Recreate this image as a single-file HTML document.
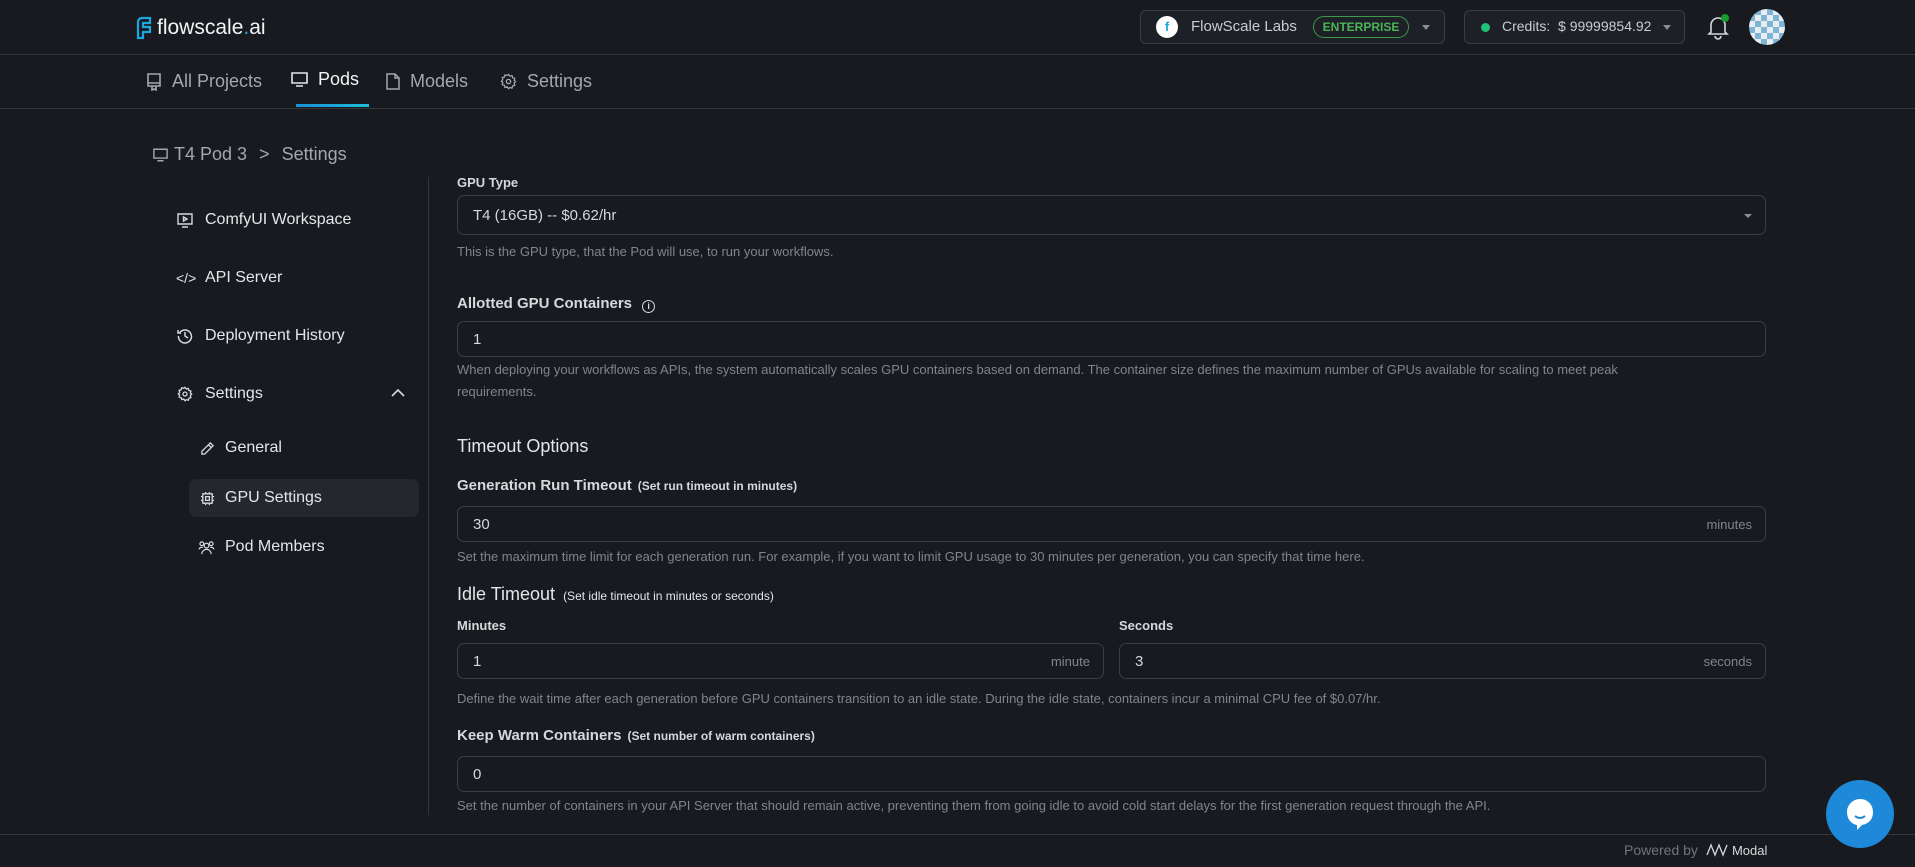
<!DOCTYPE html>
<html><head><meta charset="utf-8"><style>
*{box-sizing:border-box;margin:0;padding:0}
body{width:1915px;height:867px;overflow:hidden;background:#181a1f;font-family:"Liberation Sans",sans-serif;color:#e4e6ea;position:relative}
.abs{position:absolute}
.hl{position:absolute;left:0;width:1915px;height:1px;background:#33363d}
.tab{position:absolute;top:71px;font-size:18px;color:#a3a7ae;display:flex;align-items:center;gap:10px;white-space:nowrap}
.side{position:absolute;font-size:16px;color:#e4e6ea;display:flex;align-items:center;gap:12px;white-space:nowrap}
.lbl{position:absolute;left:457px;font-size:13px;font-weight:bold;color:#d6d8dc}
.lbl2{position:absolute;left:457px;font-size:15px;font-weight:bold;color:#d6d8dc}
.lbl2 small{font-size:12px;margin-left:6px}
.inp{position:absolute;border:1px solid #3a3d44;border-radius:7px;background:#181a1f;font-size:15px;color:#d6d8dc;padding-left:15px;display:flex;align-items:center}
.unit{position:absolute;right:13px;font-size:13px;color:#7f858e}
.help{position:absolute;left:457px;font-size:13px;color:#7f858e;line-height:22px;width:1300px}
svg{display:block}
</style></head><body>
<!-- header -->
<svg class="abs" style="left:135px;top:16px" width="17" height="24" viewBox="0 0 17 24" fill="none" stroke="#1ba7e0" stroke-width="2.2"><path d="M3 22V6a4 4 0 0 1 4-4h8v5H8v4h7v5H8v6z"/></svg>
<div class="abs" style="left:157px;top:16px;font-size:21px;color:#f2f3f5">flowscale<span style="color:#1ba7e0">.</span>ai</div>

<div class="abs" style="left:1140px;top:10px;width:305px;height:34px;border:1px solid #3a3d44;border-radius:6px;background:#1d2026"></div>
<div class="abs" style="left:1156px;top:16px;width:22px;height:22px;border-radius:50%;background:#fff;color:#1ba7e0;font-size:13px;font-weight:bold;text-align:center;line-height:22px">f</div>
<div class="abs" style="left:1191px;top:18px;font-size:15px;color:#c9ccd1">FlowScale Labs</div>
<div class="abs" style="left:1313px;top:16px;width:96px;height:22px;border:1px solid #3c9a4a;border-radius:11px;color:#4cb35a;font-size:12px;font-weight:bold;text-align:center;line-height:20px">ENTERPRISE</div>
<div class="abs" style="left:1422px;top:25px;border:4px solid transparent;border-top:5px solid #8a8f97"></div>

<div class="abs" style="left:1464px;top:10px;width:221px;height:34px;border:1px solid #3a3d44;border-radius:6px;background:#1d2026"></div>
<div class="abs" style="left:1481px;top:23px;width:9px;height:9px;border-radius:50%;background:#22c17a"></div>
<div class="abs" style="left:1502px;top:18px;font-size:14px;color:#c9ccd1">Credits: &nbsp;$ 99999854.92</div>
<div class="abs" style="left:1663px;top:25px;border:4px solid transparent;border-top:5px solid #8a8f97"></div>

<svg class="abs" style="left:1706px;top:14px" width="24" height="26" viewBox="0 0 24 26" fill="none" stroke="#d6d8dc" stroke-width="1.6"><path d="M5 18V11a7 7 0 0 1 14 0v7l2 2H3z M9 22a3 3 0 0 0 6 0"/></svg>
<div class="abs" style="left:1721px;top:14px;width:8px;height:8px;border-radius:50%;background:#1a9b2f"></div>
<div class="abs" style="left:1749px;top:9px;width:36px;height:36px;border-radius:50%;overflow:hidden;background:
repeating-conic-gradient(#7fb4d4 0 25%,#e6eef3 0 50%) 0 0/12px 12px"></div>
<div class="hl" style="top:54px"></div>

<!-- tabs -->
<div class="tab" style="left:146px"><svg width="16" height="18" viewBox="0 0 16 18" fill="none" stroke="#a3a7ae" stroke-width="1.6"><path d="M2 1h12v12H2z M2 10h12 M6 13v4l2-1 2 1v-4"/></svg>All Projects</div>
<div class="tab" style="left:291px;color:#f2f3f5;top:69px"><svg width="17" height="15" viewBox="0 0 17 15" fill="none" stroke="#e4e6ea" stroke-width="1.6"><path d="M1 1h15v10H1z M5 14h7"/></svg>Pods</div>
<div class="abs" style="left:296px;top:104px;width:73px;height:3px;background:linear-gradient(90deg,#1a8fd6,#1bc0d6)"></div>
<div class="tab" style="left:386px"><svg width="14" height="17" viewBox="0 0 14 17" fill="none" stroke="#a3a7ae" stroke-width="1.5"><path d="M1 1h8l4 4v11H1z M9 1v4h4"/></svg>Models</div>
<div class="tab" style="left:500px"><svg width="17" height="17" viewBox="0 0 24 24" fill="none" stroke="#a3a7ae" stroke-width="1.8"><circle cx="12" cy="12" r="3"/><path d="M12 2l2 2.5 3-.8.8 3 3 .8-.8 3L22 12l-2 2.5.8 3-3 .8-.8 3-3-.8L12 22l-2-2.5-3 .8-.8-3-3-.8.8-3L2 12l2-2.5-.8-3 3-.8.8-3 3 .8z"/></svg>Settings</div>
<div class="hl" style="top:108px"></div>

<!-- breadcrumb -->
<div class="abs" style="left:153px;top:144px;font-size:18px;color:#a3a7ae;display:flex;align-items:center;gap:6px"><svg width="15" height="14" viewBox="0 0 17 15" fill="none" stroke="#a3a7ae" stroke-width="1.6"><path d="M1 1h15v10H1z M5 14h7"/></svg>T4 Pod 3 <span style="margin:0 6px">&gt;</span> Settings</div>

<!-- sidebar -->
<div class="abs" style="left:428px;top:177px;width:1px;height:638px;background:#33363d"></div>
<div class="side" style="left:177px;top:211px"><svg width="16" height="16" viewBox="0 0 16 16" fill="none" stroke="#d6d8dc" stroke-width="1.4"><path d="M1 2h14v10H1z M5 15h6"/><path d="M6.5 5l3.5 2-3.5 2z"/></svg>ComfyUI Workspace</div>
<div class="side" style="left:176px;top:269px"><span style="font-size:14px;width:17px">&lt;/&gt;</span>API Server</div>
<div class="side" style="left:177px;top:327px"><svg width="16" height="16" viewBox="0 0 16 16" fill="none" stroke="#d6d8dc" stroke-width="1.5"><path d="M2.5 5A6.5 6.5 0 1 1 1.5 8 M1 2v3h3 M8 4v4l3 2"/></svg>Deployment History</div>
<div class="side" style="left:177px;top:385px"><svg width="16" height="16" viewBox="0 0 24 24" fill="none" stroke="#d6d8dc" stroke-width="2"><circle cx="12" cy="12" r="3"/><path d="M12 2l2 2.5 3-.8.8 3 3 .8-.8 3L22 12l-2 2.5.8 3-3 .8-.8 3-3-.8L12 22l-2-2.5-3 .8-.8-3-3-.8.8-3L2 12l2-2.5-.8-3 3-.8.8-3 3 .8z"/></svg>Settings</div>
<svg class="abs" style="left:391px;top:388px" width="14" height="9" viewBox="0 0 14 9" fill="none" stroke="#d6d8dc" stroke-width="1.6"><path d="M1 8l6-6 6 6"/></svg>
<div class="side" style="left:200px;top:439px;gap:10px"><svg width="15" height="15" viewBox="0 0 16 16" fill="none" stroke="#d6d8dc" stroke-width="1.4"><path d="M11 2l3 3-9 9H2v-3z M9 4l3 3"/></svg>General</div>
<div class="abs" style="left:189px;top:479px;width:230px;height:38px;border-radius:7px;background:#24272e"></div>
<div class="side" style="left:200px;top:489px;gap:10px"><svg width="15" height="15" viewBox="0 0 16 16" fill="none" stroke="#d6d8dc" stroke-width="1.4"><path d="M3 3h10v10H3z M6 6h4v4H6z M6 1v2M10 1v2M6 13v2M10 13v2M1 6h2M1 10h2M13 6h2M13 10h2"/></svg>GPU Settings</div>
<div class="side" style="left:198px;top:538px;gap:10px"><svg width="17" height="15" viewBox="0 0 18 16" fill="none" stroke="#d6d8dc" stroke-width="1.3"><circle cx="9" cy="6" r="2.5"/><circle cx="4" cy="4" r="2"/><circle cx="14" cy="4" r="2"/><path d="M4 15a5 5 0 0 1 10 0 M1 10a3 3 0 0 1 4-2 M17 10a3 3 0 0 0-4-2"/></svg>Pod Members</div>

<!-- main -->
<div class="lbl" style="top:175px">GPU Type</div>
<div class="inp" style="left:457px;top:195px;width:1309px;height:40px">T4 (16GB) -- $0.62/hr</div>
<div class="abs" style="left:1744px;top:214px;border:4px solid transparent;border-top:4px solid #8a8f97;border-left-width:4.5px;border-right-width:4.5px"></div>
<div class="help" style="top:241px">This is the GPU type, that the Pod will use, to run your workflows.</div>

<div class="lbl2" style="top:295px">Allotted GPU Containers <span style="display:inline-block;width:13px;height:13px;border:1.2px solid #d6d8dc;border-radius:50%;font-size:9px;text-align:center;line-height:11px;margin-left:6px;vertical-align:-1px">i</span></div>
<div class="inp" style="left:457px;top:321px;width:1309px;height:36px">1</div>
<div class="help" style="top:359px">When deploying your workflows as APIs, the system automatically scales GPU containers based on demand. The container size defines the maximum number of GPUs available for scaling to meet peak<br>requirements.</div>

<div class="abs" style="left:457px;top:436px;font-size:18px;color:#e4e6ea">Timeout Options</div>
<div class="lbl2" style="top:477px">Generation Run Timeout<small>(Set run timeout in minutes)</small></div>
<div class="inp" style="left:457px;top:506px;width:1309px;height:36px">30<span class="unit">minutes</span></div>
<div class="help" style="top:546px">Set the maximum time limit for each generation run. For example, if you want to limit GPU usage to 30 minutes per generation, you can specify that time here.</div>

<div class="abs" style="left:457px;top:584px;font-size:18px;color:#e4e6ea">Idle Timeout<span style="font-size:12px;margin-left:8px">(Set idle timeout in minutes or seconds)</span></div>
<div class="lbl" style="top:618px">Minutes</div>
<div class="lbl" style="top:618px;left:1119px">Seconds</div>
<div class="inp" style="left:457px;top:643px;width:647px;height:36px">1<span class="unit">minute</span></div>
<div class="inp" style="left:1119px;top:643px;width:647px;height:36px">3<span class="unit">seconds</span></div>
<div class="help" style="top:688px">Define the wait time after each generation before GPU containers transition to an idle state. During the idle state, containers incur a minimal CPU fee of $0.07/hr.</div>

<div class="lbl2" style="top:727px">Keep Warm Containers<small>(Set number of warm containers)</small></div>
<div class="inp" style="left:457px;top:756px;width:1309px;height:36px">0</div>
<div class="help" style="top:795px">Set the number of containers in your API Server that should remain active, preventing them from going idle to avoid cold start delays for the first generation request through the API.</div>

<div class="hl" style="top:834px"></div>
<div class="abs" style="left:1624px;top:842px;font-size:14px;color:#6f757e;display:flex;align-items:center;gap:8px">Powered by <svg width="22" height="14" viewBox="0 0 22 14" fill="none" stroke="#d6d8dc" stroke-width="1.3"><path d="M1 12L5 2l4 10 4-10 4 10 4-10"/></svg><span style="color:#d6d8dc;font-size:13px;margin-left:-4px">Modal</span></div>

<div class="abs" style="left:1826px;top:780px;width:68px;height:68px;border-radius:50%;background:#1e88d9"></div>
<svg class="abs" style="left:1844px;top:797px" width="32" height="36" viewBox="0 0 32 36"><path d="M16 2c7 0 13 5 13 13s-5 12-11 13l-5 5v-5C7 27 3 22 3 15S9 2 16 2z" fill="#fff"/><path d="M11 19q5 4 10 0" stroke="#1e88d9" stroke-width="2" fill="none"/></svg>
</body></html>
